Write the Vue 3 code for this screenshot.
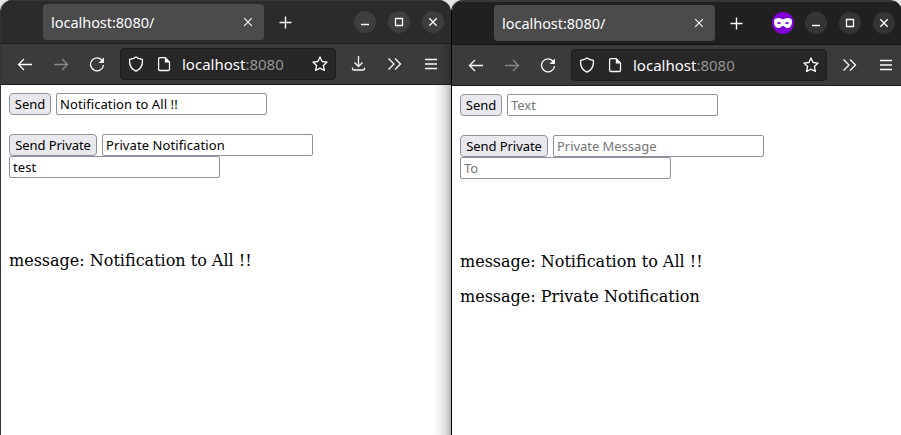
<script setup>
import { ref } from 'vue'

const windows = ref([
  {
    id: 'main',
    isPrivate: false,
    text: 'Notification to All !!',
    direct: 'Private Notification',
    to: 'test',
    messages: ['Notification to All !!'],
  },
  {
    id: 'private',
    isPrivate: true,
    text: '',
    direct: '',
    to: '',
    messages: ['Notification to All !!', 'Private Notification'],
  },
])
</script>

<template>
  <main class="desktop">
    <section v-for="w in windows" :key="w.id" class="window" :class="w.id">
      <header class="tabs">
        <div class="tab">
          <span class="tab-title">localhost:8080/</span>
          <svg class="icon" viewBox="0 0 16 16"><path d="M4.200 4.200l7.600 7.600M11.800 4.200l-7.600 7.600" stroke-width="1.1" /></svg>
        </div>
        <svg class="icon plus" viewBox="0 0 16 16"><path d="M8.500 2.500v12M2.500 8.500h12" /></svg>
        <div class="controls">
          <svg v-if="w.isPrivate" class="mask" viewBox="0 0 22 22">
            <circle cx="11" cy="11" r="11" fill="#8000d7" />
            <path fill="#fff" fill-rule="evenodd" d="M2 9.500C2 6.800 3.800 6 6.300 6C8.500 6 9.500 7.200 11 7.200S13.500 6 15.700 6C18.200 6 20 6.800 20 9.500C20 13.500 18.200 16 15.500 16C13.200 16 12.600 14 11 14S8.800 16 6.500 16C3.800 16 2 13.500 2 9.500ZM4.800 11.300Q7 8.800 9.200 11.300Q7 12.800 4.800 11.300ZM12.800 11.300Q15 8.800 17.200 11.300Q15 12.800 12.800 11.300Z" />
          </svg>
          <span class="control"><svg class="icon" viewBox="0 0 16 16"><path d="M4 10.500h8" /></svg></span>
          <span class="control"><svg class="icon" viewBox="0 0 16 16"><path d="M4.500 4.500h7v7h-7z" /></svg></span>
          <span class="control"><svg class="icon" viewBox="0 0 16 16"><path d="M4.300 4.300l7.400 7.400M11.700 4.300l-7.400 7.400" stroke-width="1.4" /></svg></span>
        </div>
      </header>
      <nav class="toolbar">
        <svg class="icon" viewBox="0 0 16 16"><path d="M15 8.500H1.500M7 3L1.500 8.500L7 14" /></svg>
        <svg class="icon dim" viewBox="0 0 16 16"><path d="M1 8.500h13.500M9 3l5.500 5.500L9 14" /></svg>
        <svg class="icon" viewBox="0 0 16 16"><path d="M13.300 4.500A6.500 6.500 0 1 0 14.500 9" /><path d="M15 1.500v5.500H9.500z" class="solid" /></svg>
        <div class="address">
          <svg class="icon" viewBox="0 0 16 16"><path d="M8 1C9.500 2.500 12 3 14.300 3.300C15 8.500 12.500 13 8 15.200C3.500 13 1 8.500 1.700 3.300C4 3 6.500 2.500 8 1Z" /></svg>
          <svg class="icon page" viewBox="0 0 16 16"><path d="M3.800 1.700h5.500l4.200 4.200v7.400a1.200 1.200 0 0 1-1.200 1.200H3.800a1.200 1.200 0 0 1-1.200-1.200V2.900a1.200 1.200 0 0 1 1.200-1.200z" /><path class="solid" d="M8.800 1.500l4.900 4.900H8.800z" /></svg>
          <span class="url">localhost<span>:8080</span></span>
          <svg class="icon star" viewBox="0 0 16 16"><path d="M8 .9l2.100 4.600 5 .6-3.700 3.400 1 5L8 12.100l-4.400 2.400 1-5L.9 6.100l5-.6z" stroke-linejoin="round" /></svg>
        </div>
        <svg v-if="!w.isPrivate" class="icon" viewBox="0 0 16 16"><path d="M8.500 0v10M4.500 6.500l4 4 4-4M2.500 11.500v1.200a1.300 1.300 0 0 0 1.300 1.300h9.400a1.300 1.300 0 0 0 1.300-1.300v-1.200" /></svg>
        <svg class="icon chevrons" viewBox="0 0 16 16"><path d="M2.500 2.500L8 8L2.500 13.500M9 2.500L14.500 8L9 13.500" /></svg>
        <svg class="icon menu" viewBox="0 0 16 16"><path d="M2 3.500h12M2 8h12M2 12.500h12" /></svg>
      </nav>
      <div class="content">
        <div class="row">
          <button>Send</button>
          <input v-model="w.text" placeholder="Text" />
        </div>
        <div class="row direct">
          <button class="wide">Send Private</button>
          <input v-model="w.direct" placeholder="Private Message" />
          <input v-model="w.to" placeholder="To" />
        </div>
        <div class="messages">
          <p v-for="m in w.messages" :key="m">message: {{ m }}</p>
        </div>
      </div>
    </section>
  </main>
</template>

<style>
body {
  margin: 0;
  background: #e4e4e4;
}
</style>

<style scoped>
* {
  box-sizing: border-box;
}
.desktop {
  display: flex;
  width: 901px;
  height: 435px;
  overflow: hidden;
  background: #e4e4e4;
}
.window {
  width: 451px;
  height: 435px;
  flex: none;
  border-left: 1px solid #333;
  border-radius: 12px 12px 0 0;
  overflow: hidden;
  background: #fff;
}
.window.private {
  padding-top: 1px;
  background: linear-gradient(#373737 1px, #fff 1px);
  border-left-color: #000;
}
.tabs {
  height: 44px;
  display: flex;
  align-items: center;
  background: #2b2b2b;
  border-bottom: 1px solid #1c1c1c;
  border-top: 1px solid #373737;
  padding: 0 7px 0 42px;
}
.private .tabs {
  background: #202020;
  border-bottom-color: #141414;
}
.tab {
  width: 221px;
  height: 36px;
  padding: 0 8px;
  display: flex;
  align-items: center;
  justify-content: space-between;
  border-radius: 4px;
  background: #4b4b4b;
  color: #fbfbfe;
}
.tab-title {
  font: 14.5px/20px "Noto Sans", sans-serif;
  letter-spacing: -0.03px;
  margin-top: -1px;
}
.icon {
  display: block;
  width: 16px;
  height: 16px;
  flex: none;
  fill: none;
  stroke: #fbfbfe;
  stroke-width: 1.3;
}
.solid {
  fill: #fbfbfe;
  stroke: none;
}
.plus {
  margin-left: 13px;
  stroke-width: 1.4;
}
.controls {
  display: flex;
  gap: 12px;
  margin-left: auto;
}
.control {
  width: 22px;
  height: 22px;
  display: grid;
  place-items: center;
  border-radius: 50%;
  background: #3e3e3e;
}
.private .control {
  background: #353535;
}
.mask {
  width: 22px;
  height: 22px;
  margin-right: -1px;
}
.toolbar {
  height: 41px;
  padding: 0 11px 1px 16px;
  display: flex;
  align-items: center;
  background: linear-gradient(90deg, #3b3b3b 438px, #2f2f2f 450px);
  border-bottom: 1px solid #1c1b22;
}
.private .toolbar {
  padding-right: 7px;
  background: #3b3b3b;
}
.toolbar > .icon + .icon {
  margin-left: 20px;
}
.toolbar > .chevrons + .menu {
  margin-left: 21px;
}
.dim {
  opacity: 0.4;
}
.address {
  width: 216px;
  height: 32px;
  flex: none;
  margin: 0 14px 0 15px;
  padding: 0 7px;
  display: flex;
  align-items: center;
  border: 1px solid #1d1d1d;
  border-radius: 4px;
  background: #272727;
}
.private .address {
  width: 256px;
}
.page {
  margin-left: 12px;
}
.url {
  margin-left: 10px;
  color: #fbfbfe;
  font: 15px/20px "Noto Sans", sans-serif;
}
.url span {
  color: #949494;
}
.star {
  margin-left: auto;
}
.content {
  padding: 8px;
}
.row {
  display: flex;
  flex-wrap: wrap;
  column-gap: 5px;
}
.direct {
  width: 320px;
  margin-top: 19px;
}
button,
input {
  height: 22px;
  margin: 0;
  border: 1px solid #8f8f9d;
  color: #000;
  font: 13px/18px "Noto Sans", sans-serif;
  letter-spacing: -0.06px;
}
button {
  width: 42px;
  padding: 0;
  border-radius: 4px;
  background: #e9e9ed;
}
button.wide {
  width: 88px;
}
input {
  width: 211px;
  padding: 0 3px;
  border-radius: 2px;
  background: #fff;
  letter-spacing: 0.09px;
}
input::placeholder {
  color: #757575;
  opacity: 1;
  letter-spacing: -0.04px;
}
.messages {
  margin-top: 73px;
}
.messages p {
  margin: 0 0 16px;
  color: #000;
  font: 16px/19px "DejaVu Serif", serif;
}
.main .content {
  height: 350px;
  background: linear-gradient(90deg, transparent 432px, #f4f4f4 438px, #dedede 444px, #b8b8b8 450px);
}
</style>
